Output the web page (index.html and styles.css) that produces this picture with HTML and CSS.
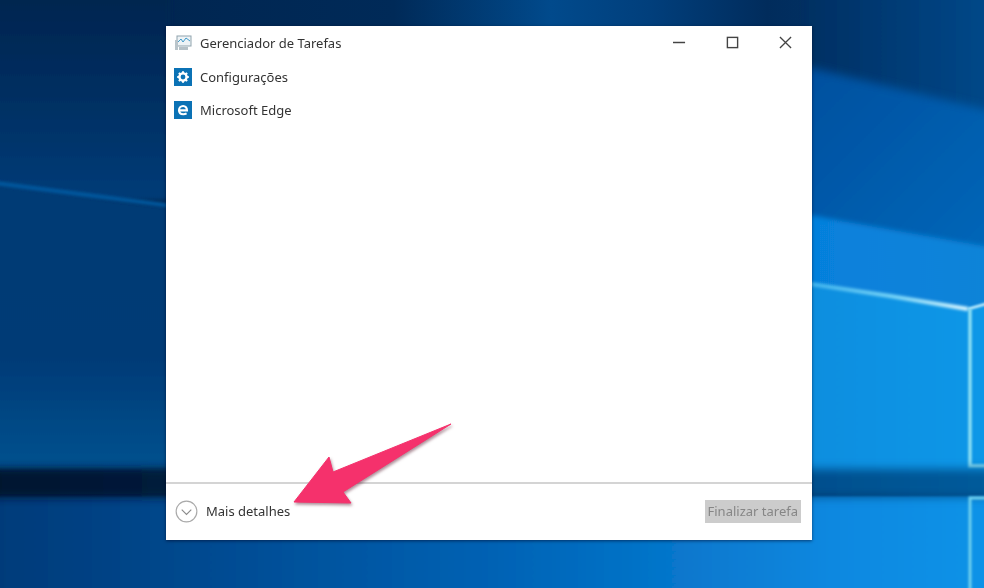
FILE: index.html
```html
<!DOCTYPE html>
<html lang="pt-BR">
<head>
    <meta charset="UTF-8">
    <title>Gerenciador de Tarefas</title>
    <link rel="stylesheet" href="styles.css">
</head>
<body>
    <svg class="wallpaper" viewBox="0 0 984 588" preserveAspectRatio="none">
        <defs>
            <linearGradient id="sky" x1="0" y1="0" x2="1" y2="0">
                <stop offset="0" stop-color="#00234c"/>
                <stop offset="0.4" stop-color="#002a58"/>
                <stop offset="0.56" stop-color="#014a8c"/>
                <stop offset="0.66" stop-color="#013f7c"/>
                <stop offset="0.78" stop-color="#012c5c"/>
                <stop offset="1" stop-color="#023d78"/>
            </linearGradient>
            <linearGradient id="left-top" x1="0" y1="0" x2="0" y2="1">
                <stop offset="0" stop-color="#00234c"/>
                <stop offset="0.5" stop-color="#002e60"/>
                <stop offset="1" stop-color="#003c78"/>
            </linearGradient>
            <linearGradient id="left-low" x1="0" y1="0" x2="0" y2="1">
                <stop offset="0" stop-color="#013a74"/>
                <stop offset="0.6" stop-color="#013a76"/>
                <stop offset="1" stop-color="#03528f"/>
            </linearGradient>
            <linearGradient id="right-top" x1="0" y1="0" x2="1" y2="0">
                <stop offset="0" stop-color="#012f62"/>
                <stop offset="1" stop-color="#024a8c"/>
            </linearGradient>
            <linearGradient id="right-band" x1="0" y1="0" x2="1" y2="1">
                <stop offset="0" stop-color="#024f9e"/>
                <stop offset="1" stop-color="#0368ba"/>
            </linearGradient>
            <linearGradient id="right-mid" x1="0" y1="0" x2="1" y2="0">
                <stop offset="0" stop-color="#0680dc"/>
                <stop offset="1" stop-color="#0a84d8"/>
            </linearGradient>
            <linearGradient id="right-low" x1="0" y1="0" x2="1" y2="0">
                <stop offset="0" stop-color="#078edf"/>
                <stop offset="1" stop-color="#0b98e8"/>
            </linearGradient>
            <linearGradient id="strip" x1="0" y1="0" x2="1" y2="0">
                <stop offset="0" stop-color="#00132e"/>
                <stop offset="0.17" stop-color="#001a3a"/>
                <stop offset="0.83" stop-color="#03508f"/>
                <stop offset="1" stop-color="#035c9c"/>
            </linearGradient>
            <linearGradient id="bottom" x1="0" y1="0" x2="1" y2="0">
                <stop offset="0" stop-color="#013a78"/>
                <stop offset="0.17" stop-color="#01468a"/>
                <stop offset="0.5" stop-color="#0362b4"/>
                <stop offset="0.83" stop-color="#0a88e0"/>
                <stop offset="1" stop-color="#0b94e8"/>
            </linearGradient>
            <linearGradient id="glow" gradientUnits="userSpaceOnUse" x1="806" y1="0" x2="968" y2="0">
                <stop offset="0" stop-color="#3fb4ee"/>
                <stop offset="0.55" stop-color="#7ad6f8"/>
                <stop offset="1" stop-color="#e2f8ff"/>
            </linearGradient>
            <filter id="wide" filterUnits="userSpaceOnUse" x="-60" y="-60" width="1104" height="708"><feGaussianBlur stdDeviation="5"/></filter>
            <filter id="edge" filterUnits="userSpaceOnUse" x="-60" y="-60" width="1104" height="708"><feGaussianBlur stdDeviation="2.5"/></filter>
            <filter id="soft" filterUnits="userSpaceOnUse" x="-60" y="-60" width="1104" height="708"><feGaussianBlur stdDeviation="1.5"/></filter>
            <filter id="line" filterUnits="userSpaceOnUse" x="-60" y="-60" width="1104" height="708"><feGaussianBlur stdDeviation="0.9"/></filter>
        </defs>
        <rect width="984" height="588" fill="url(#sky)"/>

        <!-- left of the window -->
        <rect x="-20" y="-20" width="190" height="220" fill="url(#left-top)" filter="url(#edge)"/>
        <polygon points="-20,182 172,207 172,470 -20,470" fill="url(#left-low)" filter="url(#edge)"/>
        <polyline points="-20,181 172,206" stroke="#04589f" stroke-width="4" fill="none" filter="url(#soft)"/>

        <!-- right of the window -->
        <rect x="804" y="-20" width="200" height="140" fill="url(#right-top)" filter="url(#edge)"/>
        <polygon points="804,66 1000,113 1000,260 804,225" fill="url(#right-band)" filter="url(#wide)"/>
        <polygon points="804,214 1000,249 1000,480 804,480" fill="url(#right-mid)" filter="url(#edge)"/>
        <polygon points="804,283 968,308 1000,300 1000,480 804,480" fill="url(#right-low)" filter="url(#line)"/>
        <polyline points="804,283 890,296 968,309" stroke="url(#glow)" stroke-width="4" fill="none" filter="url(#soft)"/>
        <polyline points="968,309 1000,300" stroke="#c8effd" stroke-width="2.500" fill="none" filter="url(#line)"/>
        <polyline points="970,309 970,466 1000,466" stroke="#8ce0f4" stroke-width="3.500" fill="none" filter="url(#line)"/>

        <!-- bottom part and the dark strip across -->
        <rect x="-20" y="496" width="1024" height="112" fill="url(#bottom)" filter="url(#line)"/>
        <rect x="-20" y="469" width="1024" height="28" fill="url(#strip)" filter="url(#wide)"/>
        <polyline points="1000,498 970,498 970,600" stroke="#6fd0ee" stroke-width="3" fill="none" filter="url(#line)"/>
    </svg>

    <div class="window">
        <div class="task-list">
            <div class="task first">
                <svg class="task-icon" viewBox="0 0 18 18">
                    <rect x="3" y="2" width="14" height="10" fill="#eef3f6" stroke="#8fa3ad"/>
                    <polyline points="4,8 7,5 9,8 12,4 16,7" fill="none" stroke="#3f9ac9"/>
                    <rect x="1" y="6" width="3" height="10" fill="#b9c4ca"/>
                    <rect x="5" y="13" width="9" height="3" fill="#b6c1c7"/>
                </svg>
                <span>Gerenciador de Tarefas</span>
            </div>
            <div class="task">
                <svg class="task-icon" viewBox="0 0 18 18">
                    <rect width="18" height="18" fill="#0b72b5"/>
                    <circle cx="9" cy="9" r="3.6" fill="none" stroke="#fff" stroke-width="2.4"/>
                    <path d="M9 3.2v2.4M9 12.4v2.4M3.2 9h2.4M12.4 9h2.4M4.9 4.9l1.7 1.7M11.4 11.4l1.7 1.7M13.1 4.9l-1.7 1.7M6.6 11.4l-1.7 1.7" stroke="#fff" stroke-width="2"/>
                </svg>
                <span>Configurações</span>
            </div>
            <div class="task">
                <svg class="task-icon" viewBox="0 0 18 18">
                    <rect width="18" height="18" fill="#0b72b5"/>
                    <path d="M5 9.4h8c0-2.7-1.5-4.4-3.9-4.4C6.700 5 5 6.800 5 9.200c0 2.500 1.700 4 4.300 4 1.300 0 2.400-.3 3.300-.8" fill="none" stroke="#fff" stroke-width="2.100"/>
                </svg>
                <span>Microsoft Edge</span>
            </div>
        </div>

        <div class="caption-buttons">
            <svg viewBox="0 0 14 14"><path d="M0 7h13" stroke="#444" stroke-width="1.6"/></svg>
            <svg viewBox="0 0 14 14"><rect x="1.5" y="1.5" width="11" height="11" fill="none" stroke="#444" stroke-width="1.5"/></svg>
            <svg viewBox="0 0 14 14"><path d="M1 1l12 12M13 1L1 13" stroke="#444" stroke-width="1.4"/></svg>
        </div>

        <div class="footer">
            <div class="more">
                <svg class="chevron" viewBox="0 0 24 24">
                    <circle cx="12" cy="12" r="10.8" fill="none" stroke="#a9a9a9" stroke-width="1.2"/>
                    <path d="M7 10l5 5 5-5" fill="none" stroke="#8a8a8a" stroke-width="1.2"/>
                </svg>
                <span>Mais detalhes</span>
            </div>
            <div class="end-task">Finalizar tarefa</div>
        </div>

        <svg class="arrow" viewBox="0 0 170 90">
            <polygon points="160,2 42,50 38,35 3,80 60,81 52,70" fill="#f5316c" stroke="#f5316c" stroke-linejoin="round"/>
        </svg>
    </div>
</body>
</html>
```

FILE: styles.css
```css
html, body {
    margin: 0;
    height: 100%;
    overflow: hidden;
}
body {
    padding: 26px 0 0 166px;
    box-sizing: border-box;
    font-family: "Noto Sans", "Open Sans", sans-serif;
    font-size: 13px;
    color: #333;
}
.wallpaper {
    position: absolute;
    top: 0;
    left: 0;
    width: 984px;
    height: 588px;
}
.window {
    position: relative;
    display: flex;
    flex-direction: column;
    width: 646px;
    height: 514px;
    background: #fff;
    box-shadow: 0 1px 3px rgba(0, 0, 30, 0.55);
}
.task-list {
    flex: 1;
    padding: 0 8px;
}
.task {
    display: flex;
    align-items: center;
    gap: 8px;
    height: 33px;
}
.task.first {
    height: 34px;
}
.task-icon {
    width: 18px;
    height: 18px;
    filter: blur(0.3px);
}
.task span, .more span {
    filter: blur(0.35px);
}
.caption-buttons {
    position: absolute;
    top: 10px;
    right: 20px;
    display: flex;
    gap: 40px;
}
.caption-buttons svg {
    width: 13px;
    height: 13px;
}
.footer {
    display: flex;
    align-items: center;
    justify-content: space-between;
    height: 58px;
    padding: 0 11px 2px 9px;
    box-sizing: border-box;
    border-top: 2px solid #d4d4d4;
}
.more {
    display: flex;
    align-items: center;
    gap: 8px;
}
.chevron {
    width: 23px;
    height: 23px;
}
.end-task {
    padding: 3.5px 3px;
    background: #cccccc;
    color: #868686;
    line-height: 16px;
    filter: blur(0.4px);
}
.arrow {
    position: absolute;
    top: 396px;
    left: 125px;
    width: 170px;
    height: 90px;
    filter: drop-shadow(1px 2px 1.5px rgba(90, 30, 50, 0.5));
}
```
